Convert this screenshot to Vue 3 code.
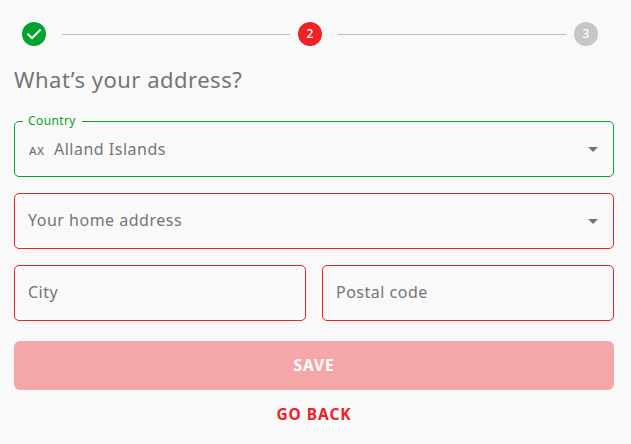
<script setup>
import { ref } from 'vue'

const steps = [
  { id: 1, state: 'done' },
  { id: 2, state: 'active' },
  { id: 3, state: 'upcoming' },
]
const country = ref({ code: 'AX', name: 'Alland Islands' })
</script>

<template>
  <main class="page">
    <nav class="stepper">
      <template v-for="(step, i) in steps" :key="step.id">
        <span v-if="i > 0" class="line"></span>
        <span class="step" :class="step.state">
          <svg v-if="step.state === 'done'" width="24" height="24" viewBox="0 0 24 24">
            <path d="M5.6 11.8 L10 16.1 L18.6 7.5" fill="none" stroke="#fff" stroke-width="2" />
          </svg>
          <span v-else>{{ step.id }}</span>
        </span>
      </template>
    </nav>

    <h1 class="title">What’s your address?</h1>

    <form class="form" @submit.prevent>
      <fieldset class="field valid">
        <legend class="legend">Country</legend>
        <div class="content">
          <span class="code">{{ country.code }}</span>
          <span class="value">{{ country.name }}</span>
          <svg class="arrow" width="24" height="24" viewBox="0 0 24 24"><path d="M7 10l5 5 5-5z" fill="#757575" /></svg>
        </div>
      </fieldset>
      <div class="field">
        <div class="content">
          <span class="placeholder">Your home address</span>
          <svg class="arrow" width="24" height="24" viewBox="0 0 24 24"><path d="M7 10l5 5 5-5z" fill="#757575" /></svg>
        </div>
      </div>
      <div class="row">
        <div class="field"><div class="content"><span class="placeholder">City</span></div></div>
        <div class="field"><div class="content"><span class="placeholder">Postal code</span></div></div>
      </div>
      <button class="save" type="submit">SAVE</button>
      <button class="back" type="button">GO BACK</button>
    </form>
  </main>
</template>

<style>
body {
  background: #f9f9f9;
}
</style>

<style scoped>
.page {
  box-sizing: border-box;
  width: 631px;
  height: 444px;
  padding: 22px 17px 0 14px;
  background: #f9f9f9;
  color: #757575;
  font-family: "Noto Sans", sans-serif;
  overflow: hidden;
}
.stepper {
  display: flex;
  align-items: center;
  height: 24px;
  padding: 0 16px 0 8px;
}
.step {
  display: flex;
  align-items: center;
  justify-content: center;
  width: 24px;
  height: 24px;
  border-radius: 50%;
  color: #fff;
  font-size: 12px;
  font-weight: 500;
  line-height: 24px;
  flex: none;
}
.done {
  background: #05a22f;
}
.active {
  background: #ee2124;
}
.upcoming {
  background: #c6c6c6;
}
.line {
  flex: 1;
  height: 1px;
  margin: 1px 8px 0 16px;
  background: #bdbdbd;
}
.title {
  margin: 17px 0 0;
  height: 32px;
  font-size: 22px;
  font-weight: 400;
  line-height: 32px;
  letter-spacing: 0.5px;
}
.form {
  display: flex;
  flex-direction: column;
  margin-top: 26px;
}
.field {
  box-sizing: border-box;
  min-width: 0;
  height: 56px;
  margin: 0 0 16px;
  padding: 0;
  border: 1px solid #ee2124;
  border-radius: 5px;
}
.field.valid {
  height: 64px;
  margin-top: -8px;
  border-color: #05a22f;
}
.legend {
  margin-left: 8px;
  padding: 0 6px 0 5px;
  height: 17px;
  color: #05a22f;
  font-size: 12px;
  line-height: 15px;
  letter-spacing: 0.4px;
}
.content {
  display: flex;
  align-items: center;
  height: 54px;
  padding: 0 8px 0 13px;
  font-size: 16px;
  line-height: 24px;
  letter-spacing: 0.5px;
}
.placeholder {
  padding-bottom: 2px;
}
.valid .content {
  height: 46px;
}
.valid .content > * {
  position: relative;
  top: -4px;
}
.code {
  box-sizing: border-box;
  width: 26px;
  padding: 4px 0 0 1px;
  font-size: 11.5px;
  font-weight: 500;
}
.arrow {
  margin-left: auto;
}
.row {
  display: grid;
  grid-template-columns: 1fr 1fr;
  gap: 16px;
}
.save,
.back {
  border: 0;
  padding: 0 0 2px;
  font-family: inherit;
  font-size: 15.5px;
  font-weight: 700;
  letter-spacing: 0.95px;
}
.save {
  height: 49px;
  margin-top: 4px;
  border-radius: 6px;
  background: #f5a6a9;
  color: #fff;
}
.back {
  height: 49px;
  background: transparent;
  color: #ee2124;
}
</style>
